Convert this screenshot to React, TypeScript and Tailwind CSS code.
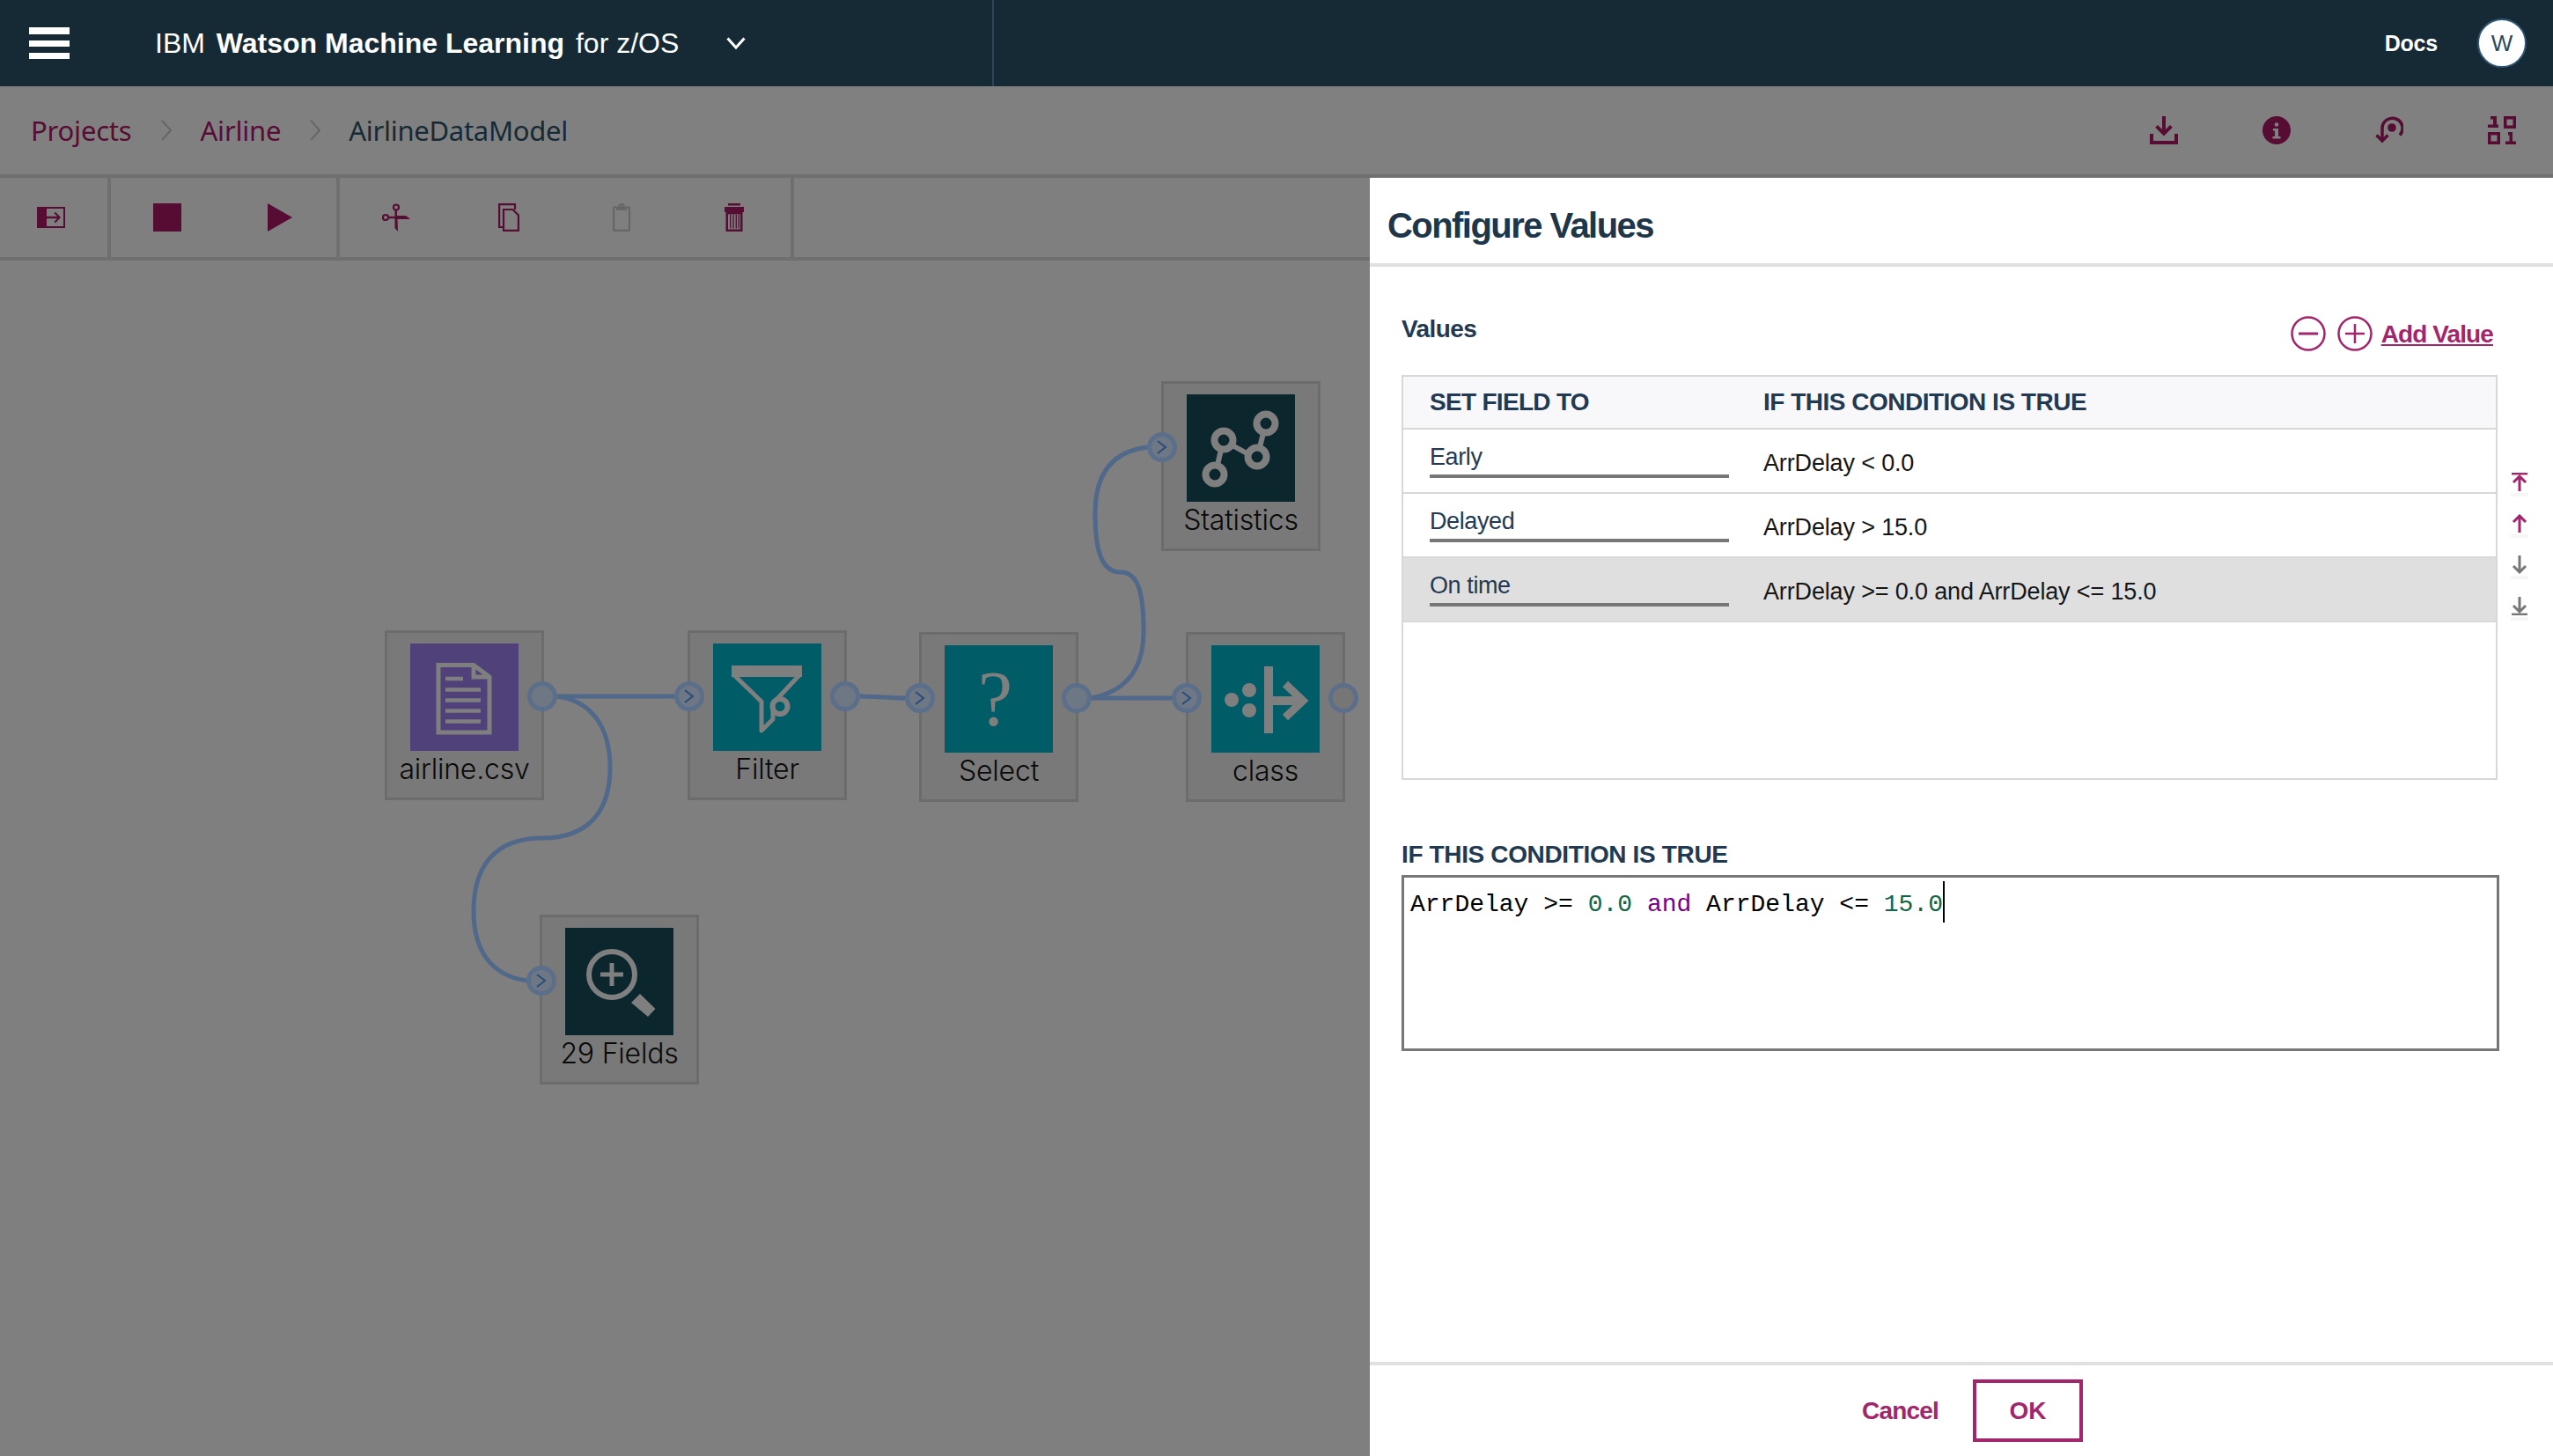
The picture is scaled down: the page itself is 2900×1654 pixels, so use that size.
import type { ReactNode } from 'react';

const CRIMSON = '#570d33';
const MAGENTA = '#a3256b';
const GLYPH = '#7f7f7f';

const sans = "font-['Liberation_Sans',Arial,sans-serif]";

function Scissors() {
  return (
    <svg width="32" height="32" viewBox="0 0 32 32" fill={CRIMSON}>
      <circle cx="16" cy="4.500" r="3" fill="none" stroke={CRIMSON} strokeWidth="2.200" />
      <circle cx="4" cy="16" r="3" fill="none" stroke={CRIMSON} strokeWidth="2.200" />
      <path d="M14.500 7.500H17V14H27L32 18H17.500L18 32L14.500 28z" />
      <path d="M7 14.800h8V17.200H7z" />
    </svg>
  );
}

function Copy() {
  return (
    <svg width="24" height="32" viewBox="0 0 24 32" fill="none" stroke={CRIMSON} strokeWidth="2.200">
      <path d="M6 27H1.100V1.100H19V7" />
      <path d="M6 7H16.500L22.900 13.500V30.900H6z" />
    </svg>
  );
}

function Paste() {
  return (
    <svg width="20" height="32" viewBox="0 0 20 32" fill="none" stroke="#666666" strokeWidth="2.200">
      <path d="M1.100 4.500H18.900V30.900H1.100z" />
      <circle cx="10" cy="3.800" r="2.700" />
      <path d="M4 6.500h12" strokeWidth="2.600" />
    </svg>
  );
}

function Trash() {
  return (
    <svg width="22" height="32" viewBox="0 0 22 32" fill={CRIMSON}>
      <path d="M4 0h14v2.500H4zM0 4h22V10H0z" />
      <path d="M1.500 10h19v22h-19zm2.500 2.500v17h14v-17z" />
      <path d="M6 13h1.400v15.500H6zM9.300 13h1.400v15.500H9.300zM12.600 13h1.400v15.500h-1.400zM15.600 13h1.400v15.500h-1.400z" />
    </svg>
  );
}

function ToolbarGroup({ children, className }: { children: ReactNode; className: string }) {
  return <div className={`flex items-center h-full border-r-4 border-[#6f6f6f] ${className}`}>{children}</div>;
}

function Port({ kind, className }: { kind: 'in' | 'out' | 'empty'; className: string }) {
  return (
    <div
      className={`absolute w-[34px] h-[34px] rounded-full border-[5px] border-[#5b6f8b] flex items-center justify-center ${
        kind === 'empty' ? 'bg-[#767676]' : 'bg-[#6d7884]'
      } ${className}`}
    >
      {kind === 'in' && (
        <svg width="14" height="16" viewBox="0 0 14 16" fill="none" stroke="#2d4a7c" strokeWidth="2">
          <path d="M2 1l9 7-9 7" />
        </svg>
      )}
    </div>
  );
}

function FlowNode({
  label,
  bg,
  className,
  children,
}: {
  label: string;
  bg: string;
  className: string;
  children: ReactNode;
}) {
  return (
    <div className={`absolute w-[181px] h-[193px] bg-[#797979] border-[3px] border-[#6c6c6c] flex flex-col items-center pt-3 ${className}`}>
      <div className={`w-[123px] h-[122px] shrink-0 flex items-center justify-center ${bg}`}>{children}</div>
      <div className="font-['Inter',sans-serif] text-[32px] leading-[42px] text-[#0a0a0a] font-light whitespace-nowrap tracking-[-0.2px]">
        {label}
      </div>
    </div>
  );
}

function Arrow({ type, color }: { type: 'top' | 'up' | 'down' | 'bottom'; color: string }) {
  const flip = type === 'down' || type === 'bottom';
  const bar = type === 'top' || type === 'bottom';
  return (
    <div className="flex flex-col items-center w-[20px] gap-[2px]">
      <svg width="18" height="21" viewBox="0 0 18 21" fill="none" stroke={color} strokeWidth="3" className={flip ? 'rotate-180' : ''}>
        {bar && <path d="M0 1.200h18" strokeWidth="2.400" />}
        <path d={bar ? 'M9 21V5M2 11l7-7 7 7' : 'M9 21V3M2 9l7-7 7 7'} />
      </svg>
      <div className="w-[20px] h-[4px] bg-[#f6f6f6]" />
    </div>
  );
}

function TableRow({ field, condition, active }: { field: string; condition: string; active?: boolean }) {
  return (
    <div className={`flex h-[73px] border-b-2 border-[#d8d8d8] ${active ? 'bg-[#dfdfdf]' : 'bg-white'}`}>
      <div className="w-[409px] pl-[30px] shrink-0">
        <div className="w-[340px] h-[55px] border-b-4 border-[#777777] flex items-end pb-[2px] text-[#1f3a52] text-[27px] leading-[36px] tracking-[-0.4px]">
          {field}
        </div>
      </div>
      <div className="pt-[20px] text-[#161616] text-[27px] leading-[36px] tracking-[-0.15px] whitespace-nowrap">{condition}</div>
    </div>
  );
}

export default function App() {
  return (
    <div className={`w-[2900px] h-[1654px] flex flex-col overflow-hidden bg-[#7f7f7f] ${sans}`}>
      {/* top bar */}
      <header className="h-[98px] shrink-0 bg-[#162a36] flex items-center text-white">
        <div className="w-[1129px] h-full shrink-0 flex items-center border-r-2 border-[#2c4557]">
          <div className="ml-[33px] w-[46px] flex flex-col gap-[7px]">
            <div className="h-[8px] bg-white" />
            <div className="h-[7px] bg-white" />
            <div className="h-[7px] bg-white" />
          </div>
          <div className="ml-[97px] text-[32px] leading-none whitespace-nowrap">
            IBM <span className="font-bold ml-1">Watson Machine Learning</span> <span className="ml-1">for z/OS</span>
          </div>
          <svg width="22" height="14" viewBox="0 0 22 14" fill="none" stroke="white" strokeWidth="3" className="ml-[54px]">
            <path d="M1.500 1.500L11 12l9.500-10.500" />
          </svg>
        </div>
        <div className="ml-auto font-bold text-[25px] tracking-[-0.2px] pt-[2px]">Docs</div>
        <div className="ml-[45px] mr-[30px] w-[56px] h-[56px] rounded-full bg-white border-2 border-[#2f5874] flex items-center justify-center text-[#2a4a60] text-[26px]">
          W
        </div>
      </header>

      {/* breadcrumb */}
      <div className="h-[104px] shrink-0 border-b-4 border-[#6f6f6f] flex items-center pl-[35px] text-[31px] bg-[#808080] font-['Noto_Sans',sans-serif]">
        <span className="text-[#570d33] tracking-[-0.2px]">Projects</span>
        <svg width="14" height="26" viewBox="0 0 14 26" fill="none" stroke="#666666" strokeWidth="2" className="ml-[32px]">
          <path d="M2 2l10 11L2 24" />
        </svg>
        <span className="ml-[32px] text-[#570d33] tracking-[-0.2px]">Airline</span>
        <svg width="14" height="26" viewBox="0 0 14 26" fill="none" stroke="#666666" strokeWidth="2" className="ml-[32px]">
          <path d="M2 2l10 11L2 24" />
        </svg>
        <span className="ml-[31px] text-[#162a36] tracking-[-0.3px]">AirlineDataModel</span>
        <div className="ml-auto flex items-center gap-[96px] pr-[42px]">
          <svg width="32" height="32" viewBox="0 0 32 32" fill={CRIMSON}>
            <path d="M14 0h4v15l5-5 2.800 2.800L16 22.500 6.200 12.800 9 10l5 5z" />
            <path d="M0 20h4v8h24v-8h4v12H0z" />
          </svg>
          <svg width="32" height="32" viewBox="0 0 32 32">
            <circle cx="16" cy="16" r="16" fill={CRIMSON} />
            <circle cx="16" cy="9.500" r="2.300" fill="#808080" />
            <path d="M12 14h6v9h2.500v2.500h-9V23H14v-6.500h-2z" fill="#808080" />
          </svg>
          <svg width="32" height="32" viewBox="0 0 32 32" fill="none" stroke={CRIMSON} strokeWidth="3.500">
            <path d="M8 27V14a11.500 11.500 0 1 1 20 7.500" />
            <circle cx="19" cy="13" r="4.800" fill={CRIMSON} stroke="none" />
            <path d="M1.500 21.500L8 28l6.500-6.500" />
          </svg>
          <svg width="32" height="32" viewBox="0 0 32 32" fill={CRIMSON}>
            <path d="M3 0h7v9.500h2V13H0V9.500h6V3.500H3z" />
            <path d="M18 0h14v14H18zm3.500 3.500v7h7v-7z" />
            <path d="M0 18h14v14H0zm3.500 3.500v7h7v-7z" />
            <path d="M23 18h5v10.500h4V32H20v-3.500h4.500V21.500H23z" />
          </svg>
        </div>
      </div>

      <div className="flex-1 flex min-h-0">
        {/* left column */}
        <div className="w-[1556px] shrink-0 flex flex-col">
          <div className="h-[94px] shrink-0 border-b-4 border-[#6f6f6f] flex bg-[#7f7f7f]">
            <ToolbarGroup className="w-[126px] pl-[42px]">
              <svg width="32" height="24" viewBox="0 0 32 24" fill={CRIMSON}>
                <path d="M0 0h32v24H0zm11 2v20h19V2z" />
                <path d="M11 10.800h12l-3.500-3.500 1.500-1.500 6 6.200-6 6.200-1.500-1.500 3.500-3.500H11z" />
              </svg>
            </ToolbarGroup>
            <ToolbarGroup className="w-[260px] pl-[48px]">
              <div className="w-[32px] h-[32px] bg-[#570d33]" />
              <svg width="28" height="32" viewBox="0 0 28 32" fill={CRIMSON} className="ml-[98px]">
                <path d="M0 0l28 16L0 32z" />
              </svg>
            </ToolbarGroup>
            <ToolbarGroup className="w-[516px] pl-[48px]">
              <Scissors />
              <div className="ml-[100px]"><Copy /></div>
              <div className="ml-[106px]"><Paste /></div>
              <div className="ml-[107px]"><Trash /></div>
            </ToolbarGroup>
          </div>

          {/* canvas */}
          <div className="relative flex-1 bg-[#7f7f7f]">
            <svg className="absolute inset-0" width="1556" height="1358" viewBox="0 296 1556 1358" fill="none" stroke="#50688a" strokeWidth="5">
              <path d="M632 791H766" />
              <path d="M977 791C990 791 1010 793 1029 793" />
              <path d="M632 791C672 796 693 826 693 872C693 922 668 952 616 952C564 952 538 982 538 1035C538 1080 558 1108 598 1114" />
              <path d="M1240 793H1331" />
              <path d="M1240 793C1280 785 1299 760 1299 717C1299 680 1295 650 1273 650C1251 650 1244 625 1244 583C1244 540 1262 513 1303 508" />
            </svg>

            <FlowNode label="airline.csv" bg="bg-[#51417a]" className="left-[437px] top-[420px]">
              <svg width="123" height="122" viewBox="0 0 123 122" fill="none" stroke={GLYPH} strokeWidth="5">
                <path d="M32 24.500H72L90 38V101H32z" />
                <path d="M72 24.500V38H90" />
                <path d="M40 40H60M40 52.500H80M40 64.500H80M40 76.500H80M40 88.500H80" strokeWidth="4.500" />
              </svg>
            </FlowNode>
            <FlowNode label="Filter" bg="bg-[#005c67]" className="left-[781px] top-[420px]">
              <svg width="123" height="122" viewBox="0 0 123 122" fill="none" stroke={GLYPH} strokeWidth="5">
                <path d="M21 25H101V38H21z" fill={GLYPH} stroke="none" />
                <path d="M24 36L55 66V99L68 86V68L98 36" strokeLinejoin="round" />
                <circle cx="76" cy="71.500" r="8.500" strokeWidth="6" />
              </svg>
            </FlowNode>
            <FlowNode label="Select" bg="bg-[#005c67]" className="left-[1044px] top-[422px]">
              <div className="font-['Liberation_Serif',serif] text-[#7f7f7f] text-[88px] leading-none pr-[8px]">?</div>
            </FlowNode>
            <FlowNode label="class" bg="bg-[#005c67]" className="left-[1347px] top-[422px]">
              <svg width="123" height="122" viewBox="0 0 123 122" fill={GLYPH} stroke="none">
                <ellipse cx="23" cy="62" rx="8" ry="8" />
                <ellipse cx="43" cy="51" rx="8" ry="8" />
                <ellipse cx="43" cy="74" rx="8" ry="8" />
                <path d="M60 24h10v76H60z" />
                <path d="M70 58h30v10H70z" />
                <path d="M84 44L104 63L84 82" fill="none" stroke={GLYPH} strokeWidth="9" />
              </svg>
            </FlowNode>
            <FlowNode label="Statistics" bg="bg-[#0b262c]" className="left-[1319px] top-[137px]">
              <svg width="123" height="122" viewBox="0 0 123 122" fill="none" stroke={GLYPH}>
                <circle cx="32" cy="91" r="10.500" strokeWidth="8" />
                <circle cx="42" cy="52" r="10.500" strokeWidth="8" />
                <circle cx="80" cy="71" r="10.500" strokeWidth="8" />
                <circle cx="90" cy="33" r="10.500" strokeWidth="8" />
                <path d="M35 80l4-17M52 58l18 10M83 60l4-16" strokeWidth="6" />
              </svg>
            </FlowNode>
            <FlowNode label="29 Fields" bg="bg-[#0b262c]" className="left-[613px] top-[743px]">
              <svg width="123" height="122" viewBox="0 0 123 122" fill="none" stroke={GLYPH}>
                <circle cx="53" cy="53" r="26" strokeWidth="6" />
                <path d="M53 40v26M40 53h26" strokeWidth="5" />
                <path d="M85 75L102.500 92L94 101L75 85z" fill={GLYPH} stroke="none" />
              </svg>
            </FlowNode>

            <Port kind="out" className="left-[599px] top-[478px]" />
            <Port kind="in" className="left-[766px] top-[478px]" />
            <Port kind="out" className="left-[943px] top-[478px]" />
            <Port kind="in" className="left-[1028px] top-[480px]" />
            <Port kind="out" className="left-[1206px] top-[480px]" />
            <Port kind="in" className="left-[1331px] top-[480px]" />
            <Port kind="empty" className="left-[1509px] top-[480px]" />
            <Port kind="in" className="left-[1303px] top-[195px]" />
            <Port kind="in" className="left-[598px] top-[801px]" />
          </div>
        </div>

        {/* configure panel */}
        <aside className="w-[1344px] shrink-0 bg-white flex flex-col">
          <div className="h-[101px] shrink-0 border-b-4 border-[#e0e0e0] pl-[20px] pt-[10px] flex items-center text-[#1d3649] text-[40px] font-semibold tracking-[-1.55px]">
            Configure Values
          </div>

          <div className="flex-1 pl-[36px] pr-[61px]">
            <div className="flex items-start justify-between h-[83px] mt-[40px] pt-[15px] mr-[2px]">
              <span className="font-bold text-[#1f3a52] text-[28px] leading-[32px] tracking-[-0.6px]">Values</span>
              <div className="flex items-center text-[#a3256b] mr-[5px] -mt-[2px]">
                <svg width="40" height="40" viewBox="0 0 40 40" fill="none" stroke={MAGENTA} strokeWidth="2.500">
                  <circle cx="20" cy="20" r="18.500" />
                  <path d="M9 20h22" strokeWidth="3" />
                </svg>
                <svg width="40" height="40" viewBox="0 0 40 40" fill="none" stroke={MAGENTA} strokeWidth="2.500" className="ml-[13px]">
                  <circle cx="20" cy="20" r="18.500" />
                  <path d="M9 20h22M20 9v22" />
                </svg>
                <span className="ml-[10px] mt-[3px] font-bold text-[28px] underline tracking-[-0.9px]">Add Value</span>
              </div>
            </div>

            <div className="relative mr-[2px]">
              <div className="h-[460px] border-2 border-[#d8d8d8]">
                <div className="h-[60px] bg-[#f8f8fa] border-b-2 border-[#d8d8d8] flex items-center font-bold text-[#1f3a52] text-[28px]">
                  <div className="w-[409px] pl-[30px] shrink-0 tracking-[-0.7px]">SET FIELD TO</div>
                  <div className="tracking-[-0.5px]">IF THIS CONDITION IS TRUE</div>
                </div>
                <TableRow field="Early" condition="ArrDelay < 0.0" />
                <TableRow field="Delayed" condition="ArrDelay > 15.0" />
                <TableRow field="On time" condition="ArrDelay >= 0.0 and ArrDelay <= 15.0" active />
              </div>
              <div className="absolute left-[1260px] top-[111px] flex flex-col gap-[20px]">
                <Arrow type="top" color={MAGENTA} />
                <Arrow type="up" color={MAGENTA} />
                <Arrow type="down" color="#777777" />
                <Arrow type="bottom" color="#777777" />
              </div>
            </div>

            <div className="mt-[68px] font-bold text-[#1f3a52] text-[28px] leading-[34px] tracking-[-0.36px]">IF THIS CONDITION IS TRUE</div>
            <div className="mt-[6px] h-[200px] border-[3px] border-[#777777] pl-[7px] pt-[10px] font-['Liberation_Mono',monospace] text-[28px] leading-[36px] whitespace-pre text-black">
              ArrDelay &gt;= <span className="text-[#116644]">0.0</span> <span className="text-[#770088]">and</span> ArrDelay &lt;= <span className="text-[#116644]">15.0</span>
              <span className="inline-block w-[2px] h-[47px] bg-black align-middle -mt-[6px]" />
            </div>
          </div>

          <div className="h-[107px] shrink-0 border-t-4 border-[#e0e0e0] flex items-center pl-[559px] text-[#a3256b] font-bold">
            <span className="text-[28px] tracking-[-0.8px]">Cancel</span>
            <div className="ml-[39px] w-[125px] h-[71px] border-4 border-[#a3256b] flex items-center justify-center text-[28px]">OK</div>
          </div>
        </aside>
      </div>
    </div>
  );
}
